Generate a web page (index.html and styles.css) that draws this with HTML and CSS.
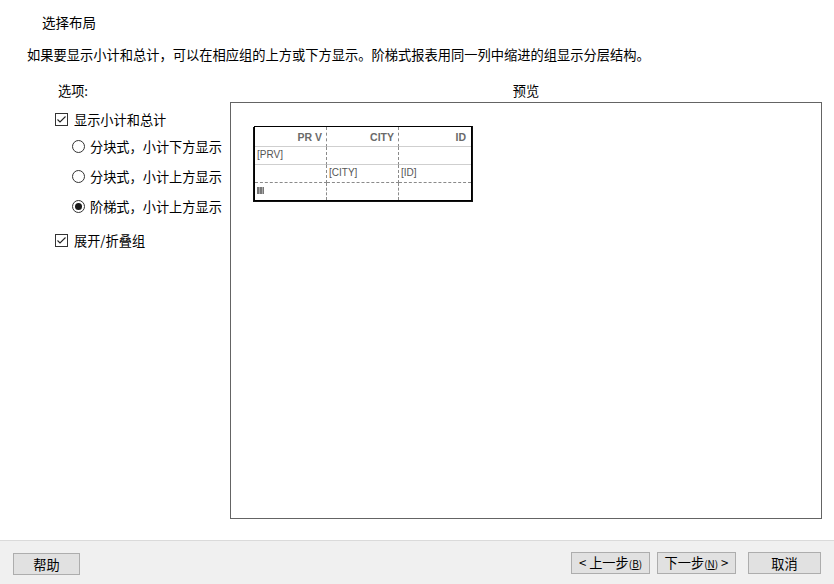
FILE: index.html
```html
<!DOCTYPE html>
<html lang="zh-CN">
<head>
<meta charset="utf-8">
<title>选择布局</title>
<link rel="stylesheet" href="styles.css">
</head>
<body>
<div class="page">
  <main class="main">
    <h1 class="title">选择布局</h1>
    <p class="desc">如果要显示小计和总计，可以在相应组的上方或下方显示。阶梯式报表用同一列中缩进的组显示分层结构。</p>
    <div class="content">
      <section class="options">
        <div class="opt-label">选项:</div>
        <label class="check first"><span class="box checked"><svg viewBox="0 0 13 13" width="13" height="13"><path d="M2.5 6.5 L5 9 L10.5 3.5" fill="none" stroke="#222" stroke-width="1.1"/></svg></span>显示小计和总计</label>
        <div class="radios">
          <label class="radio"><span class="circle"></span>分块式，小计下方显示</label>
          <label class="radio"><span class="circle"></span>分块式，小计上方显示</label>
          <label class="radio"><span class="circle on"><span class="dot"></span></span>阶梯式，小计上方显示</label>
        </div>
        <label class="check last"><span class="box checked"><svg viewBox="0 0 13 13" width="13" height="13"><path d="M2.5 6.5 L5 9 L10.5 3.5" fill="none" stroke="#222" stroke-width="1.1"/></svg></span>展开/折叠组</label>
      </section>
      <section class="preview">
        <div class="preview-label">预览</div>
        <div class="preview-box">
          <div class="grid">
            <div class="cell head c1 r1">PR V</div>
            <div class="cell head c2 r1">CITY</div>
            <div class="cell head c3 r1">ID</div>
            <div class="cell c1 r2">[PRV]</div>
            <div class="cell c2 r2"></div>
            <div class="cell c3 r2"></div>
            <div class="cell c1 r3"></div>
            <div class="cell c2 r3">[CITY]</div>
            <div class="cell c3 r3">[ID]</div>
            <div class="cell c1 r4"><span class="mark"></span></div>
            <div class="cell c2 r4"></div>
            <div class="cell c3 r4"></div>
          </div>
        </div>
      </section>
    </div>
  </main>
  <footer class="footer">
    <button class="btn help">帮助</button>
    <div class="spacer"></div>
    <button class="btn nav prev">&lt; 上一步<span class="acc">(<u>B</u>)</span></button>
    <button class="btn nav next">下一步<span class="acc">(<u>N</u>)</span> &gt;</button>
    <button class="btn cancel">取消</button>
  </footer>
</div>
</body>
</html>
```
FILE: styles.css
```css
* { box-sizing: border-box; }
html, body { margin: 0; padding: 0; }
body {
  width: 834px;
  height: 584px;
  background: #fff;
  font-family: "Noto Sans CJK SC", "Noto Sans", sans-serif;
  font-size: 13.2px;
  color: #000;
  overflow: hidden;
}
.page {
  display: flex;
  flex-direction: column;
  height: 584px;
}
.main {
  height: 540px;
  display: flex;
  flex-direction: column;
}
.title {
  margin: 12px 0 0 42px;
  font-size: 13.5px;
  font-weight: normal;
  line-height: 20px;
}
.desc {
  margin: 13px 0 0 27px;
  font-size: 13.25px;
  line-height: 20px;
}
.content {
  display: flex;
  margin-top: 16px;
}
.options {
  width: 230px;
  display: flex;
  flex-direction: column;
  font-size: 13.2px;
}
.opt-label {
  line-height: 20px;
  padding-left: 58px;
}
.check {
  display: flex;
  align-items: center;
  height: 20px;
  padding-left: 55px;
}
.check.first { margin-top: 8px; }
.check.last { margin-top: 9px; }
.box {
  width: 13px;
  height: 13px;
  border: 1px solid #333;
  margin-right: 6px;
  position: relative;
  display: inline-block;
}
.box svg { position: absolute; left: -1px; top: -1px; }
.radios {
  display: flex;
  flex-direction: column;
  margin-top: 2px;
}
.radio {
  display: flex;
  align-items: center;
  height: 30px;
  padding-left: 72px;
}
.circle {
  width: 13px;
  height: 13px;
  border: 1px solid #333;
  border-radius: 50%;
  margin-right: 5px;
  display: flex;
  align-items: center;
  justify-content: center;
}
.dot {
  width: 7px;
  height: 7px;
  border-radius: 50%;
  background: #1a1a1a;
}
.preview {
  width: 592px;
  display: flex;
  flex-direction: column;
}
.preview-label {
  line-height: 20px;
  text-align: center;
  font-size: 13.2px;
  margin-bottom: 1px;
}
.preview-box {
  height: 417px;
  border: 1px solid #646464;
  background: #fff;
  padding: 23px 0 0 23px;
}
.grid {
  display: grid;
  grid-template-columns: 72px 72px 72px;
  grid-template-rows: 20px 18px 18px 17px;
  width: 218px;
  border: 1px solid #000;
  box-shadow: -1px 1px 0 #111, 1px 1px 0 #111, 1px 0 0 #111;
  font-family: "Liberation Sans", Arial, sans-serif;
}
.cell {
  font-size: 10px;
  color: #555;
  line-height: 16px;
  padding-left: 2px;
  overflow: hidden;
  white-space: nowrap;
}
.c1, .c2 { border-right: 1px dashed #8a8a8a; }
.r1, .r2 { border-bottom: 1px solid #cfcfcf; }
.r3 { border-bottom: 1px dashed #8a8a8a; }
.head {
  font-weight: bold;
  font-size: 10.5px;
  color: #6a6a6a;
  text-align: right;
  padding: 2px 4px 0 0;
}
.c3.head { padding-right: 5px; }
.mark {
  display: inline-block;
  width: 7px;
  height: 7px;
  margin-top: 4px;
  background: linear-gradient(90deg, #777 0 2px, #aaa 2px 3px, #777 3px 5px, #aaa 5px 6px, #777 6px);
}
.footer {
  height: 44px;
  background: #f0f0f0;
  border-top: 1px solid #dadada;
  display: flex;
  align-items: flex-start;
  padding: 12px 13px 0 13px;
}
.spacer { flex: 1; }
.btn {
  height: 22px;
  background: #e1e1e1;
  border: 1px solid #adadad;
  font-family: "Noto Sans CJK SC", "Noto Sans", sans-serif;
  font-size: 13.2px;
  color: #000;
  padding: 0;
  line-height: 19px;
  text-align: center;
}
.help { width: 67px; }
.prev { width: 79px; margin-top: -1px; }
.next { width: 79px; margin-left: 7px; margin-top: -1px; }
.cancel { width: 73px; margin-left: 12px; margin-top: -1px; }
.acc { font-size: 10px; }
.acc u { text-decoration-thickness: 1px; text-underline-offset: 1px; }
```
